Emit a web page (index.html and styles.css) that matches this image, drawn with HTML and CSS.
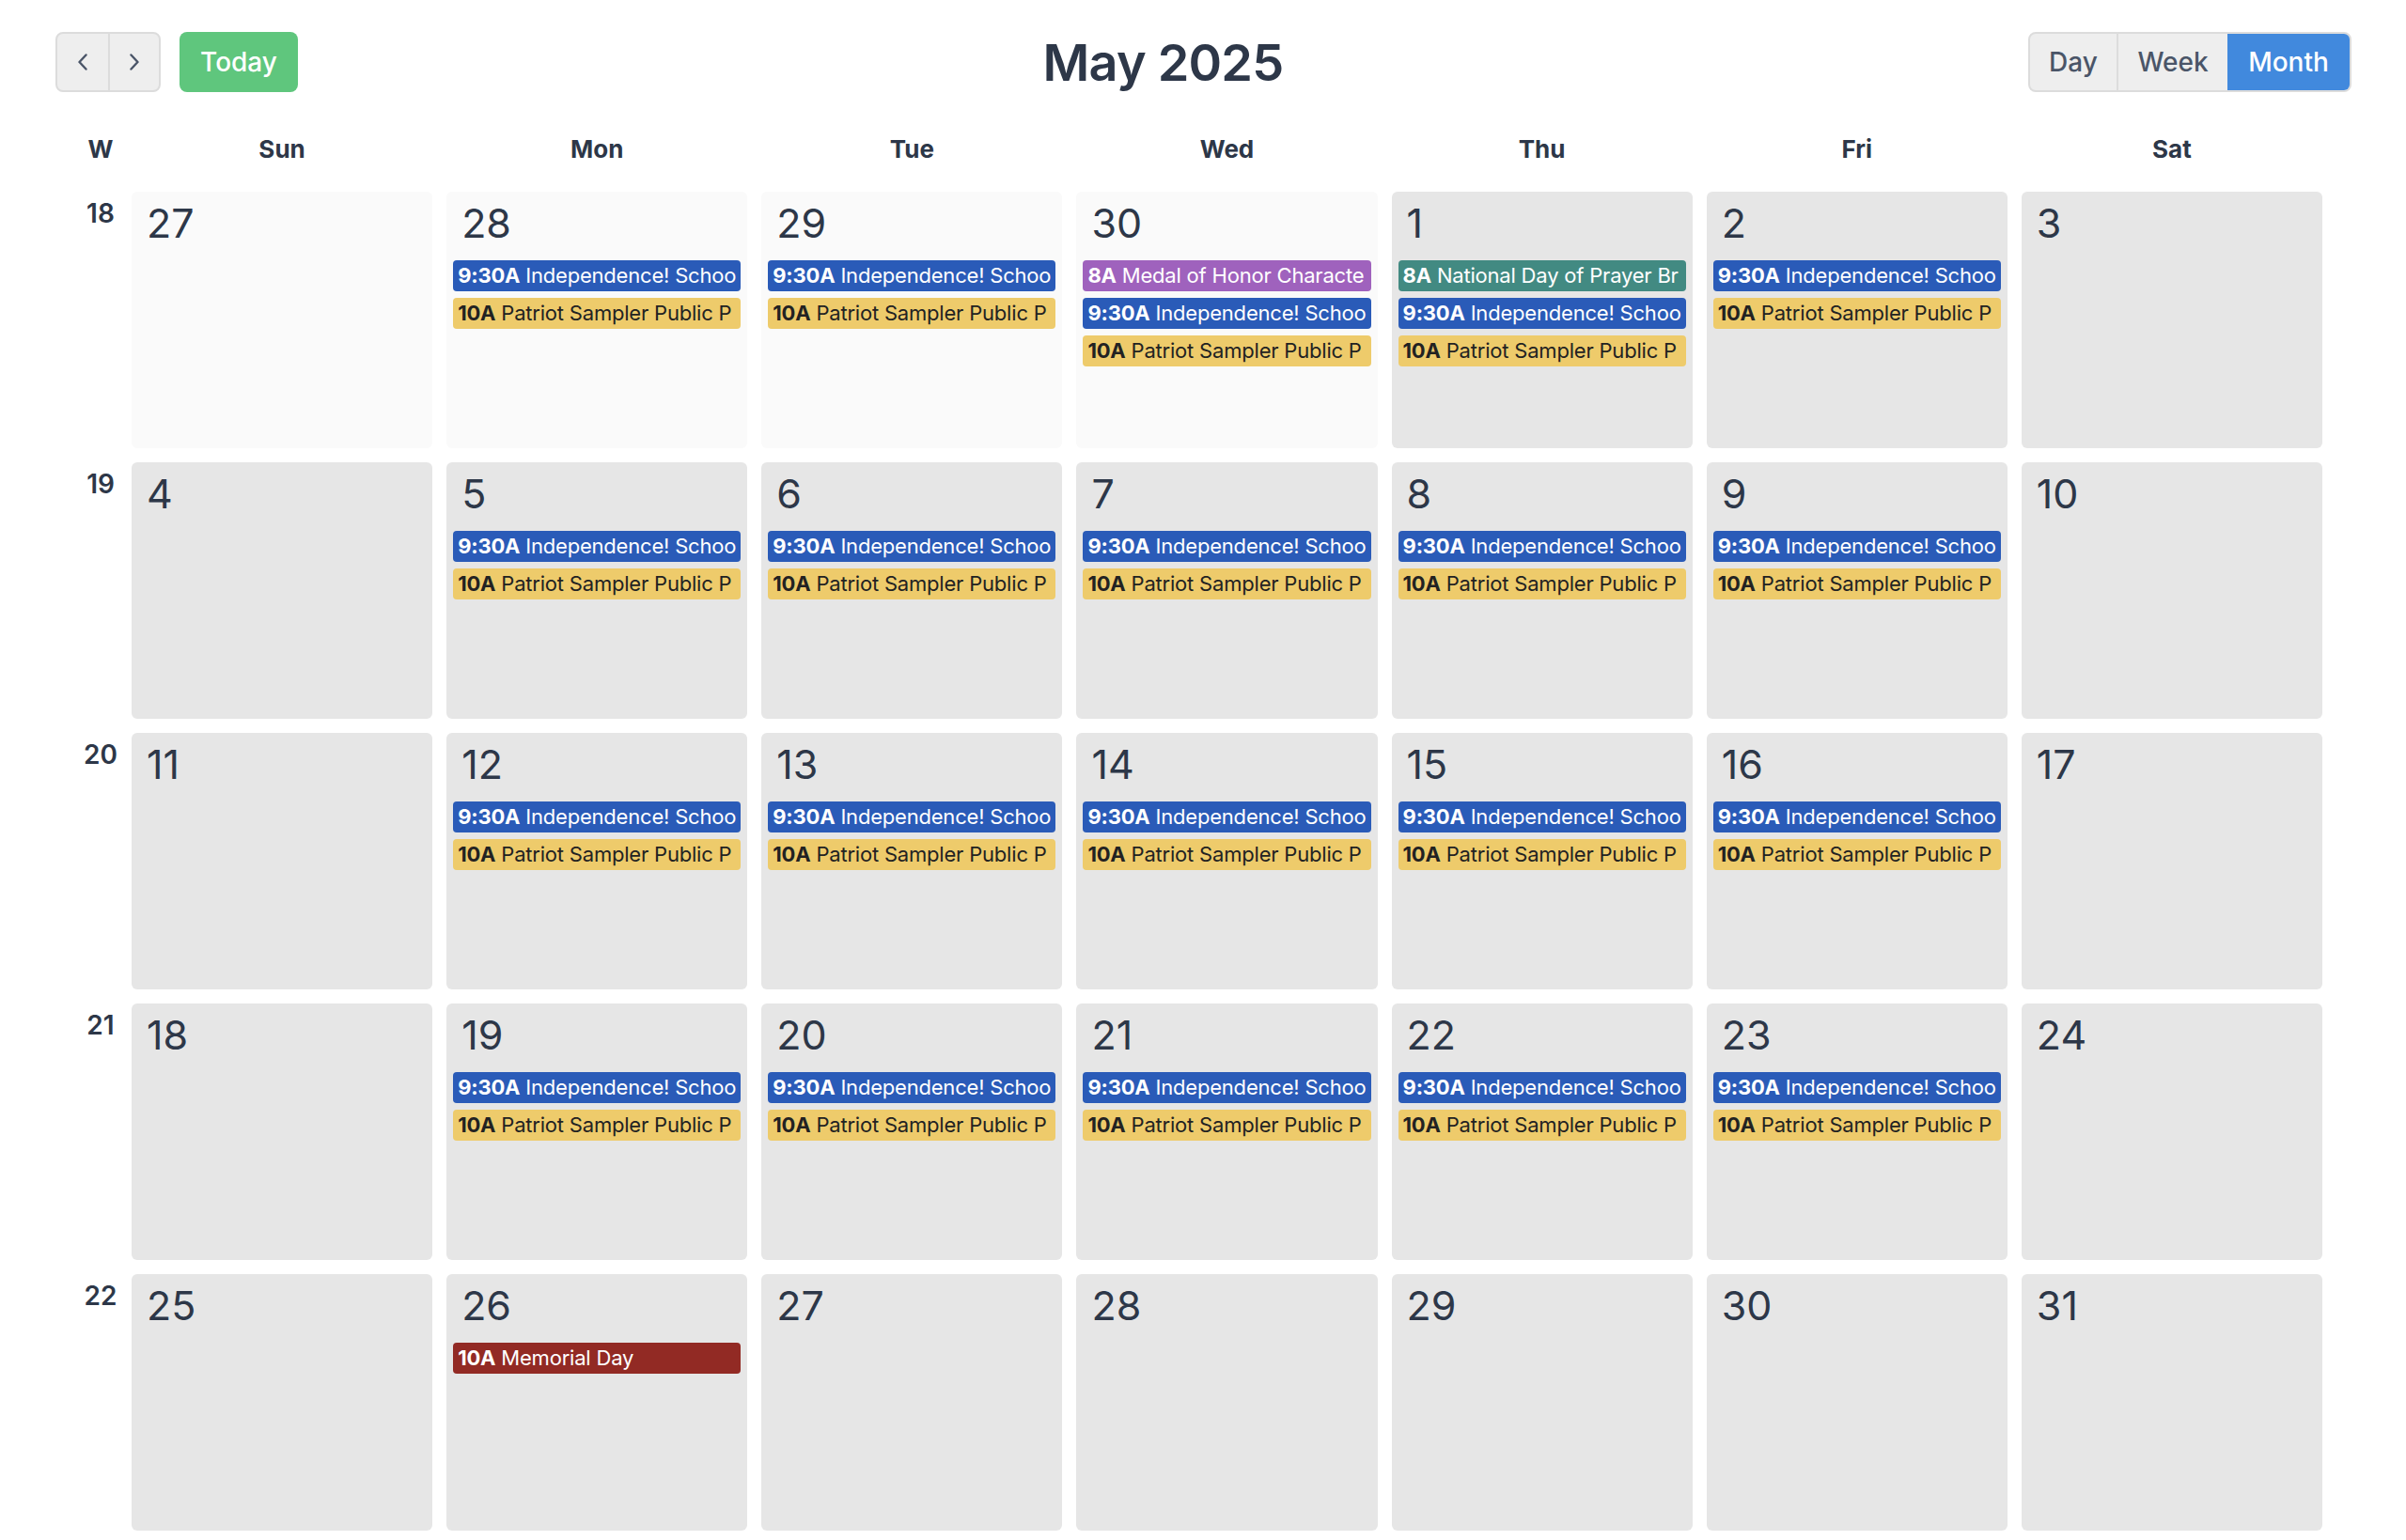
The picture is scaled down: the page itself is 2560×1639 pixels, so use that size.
FILE: index.html
```html
<!DOCTYPE html>
<html lang="en">
<head>
<meta charset="utf-8">
<title>May 2025</title>
<link rel="stylesheet" href="styles.css">
</head>
<body>
<div class="toolbar">
  <div class="left-tools">
    <div class="btn-group nav-group">
      <button class="btn nav-btn" aria-label="Previous"><svg width="12" height="18" viewBox="0 0 12 18"><polyline points="9.5,1.5 2.5,9 9.5,16.5" fill="none" stroke="#4a5568" stroke-width="2.4" stroke-linecap="round" stroke-linejoin="round"/></svg></button>
      <button class="btn nav-btn" aria-label="Next"><svg width="12" height="18" viewBox="0 0 12 18"><polyline points="2.5,1.5 9.5,9 2.5,16.5" fill="none" stroke="#4a5568" stroke-width="2.4" stroke-linecap="round" stroke-linejoin="round"/></svg></button>
    </div>
    <button class="btn today-btn">Today</button>
  </div>
  <h1 class="title">May 2025</h1>
  <div class="btn-group view-group">
    <button class="btn view-btn day-btn">Day</button>
    <button class="btn view-btn week-btn">Week</button>
    <button class="btn view-btn month-btn active">Month</button>
  </div>
</div>

<div class="month">
  <div class="head wk">W</div>
  <div class="head">Sun</div>
  <div class="head">Mon</div>
  <div class="head">Tue</div>
  <div class="head">Wed</div>
  <div class="head">Thu</div>
  <div class="head">Fri</div>
  <div class="head">Sat</div>

  <!-- week 18 -->
  <div class="wknum">18</div>
  <div class="cell out"><div class="num">27</div></div>
  <div class="cell out"><div class="num">28</div>
    <div class="ev blue"><b>9:30A</b> Independence! Schoo</div>
    <div class="ev yellow"><b>10A</b> Patriot Sampler Public P</div></div>
  <div class="cell out"><div class="num">29</div>
    <div class="ev blue"><b>9:30A</b> Independence! Schoo</div>
    <div class="ev yellow"><b>10A</b> Patriot Sampler Public P</div></div>
  <div class="cell out"><div class="num">30</div>
    <div class="ev purple"><b>8A</b> Medal of Honor Characte</div>
    <div class="ev blue"><b>9:30A</b> Independence! Schoo</div>
    <div class="ev yellow"><b>10A</b> Patriot Sampler Public P</div></div>
  <div class="cell"><div class="num">1</div>
    <div class="ev teal"><b>8A</b> National Day of Prayer Br</div>
    <div class="ev blue"><b>9:30A</b> Independence! Schoo</div>
    <div class="ev yellow"><b>10A</b> Patriot Sampler Public P</div></div>
  <div class="cell"><div class="num">2</div>
    <div class="ev blue"><b>9:30A</b> Independence! Schoo</div>
    <div class="ev yellow"><b>10A</b> Patriot Sampler Public P</div></div>
  <div class="cell"><div class="num">3</div></div>

  <!-- week 19 -->
  <div class="wknum">19</div>
  <div class="cell"><div class="num">4</div></div>
  <div class="cell"><div class="num">5</div>
    <div class="ev blue"><b>9:30A</b> Independence! Schoo</div>
    <div class="ev yellow"><b>10A</b> Patriot Sampler Public P</div></div>
  <div class="cell"><div class="num">6</div>
    <div class="ev blue"><b>9:30A</b> Independence! Schoo</div>
    <div class="ev yellow"><b>10A</b> Patriot Sampler Public P</div></div>
  <div class="cell"><div class="num">7</div>
    <div class="ev blue"><b>9:30A</b> Independence! Schoo</div>
    <div class="ev yellow"><b>10A</b> Patriot Sampler Public P</div></div>
  <div class="cell"><div class="num">8</div>
    <div class="ev blue"><b>9:30A</b> Independence! Schoo</div>
    <div class="ev yellow"><b>10A</b> Patriot Sampler Public P</div></div>
  <div class="cell"><div class="num">9</div>
    <div class="ev blue"><b>9:30A</b> Independence! Schoo</div>
    <div class="ev yellow"><b>10A</b> Patriot Sampler Public P</div></div>
  <div class="cell"><div class="num">10</div></div>

  <!-- week 20 -->
  <div class="wknum">20</div>
  <div class="cell"><div class="num">11</div></div>
  <div class="cell"><div class="num">12</div>
    <div class="ev blue"><b>9:30A</b> Independence! Schoo</div>
    <div class="ev yellow"><b>10A</b> Patriot Sampler Public P</div></div>
  <div class="cell"><div class="num">13</div>
    <div class="ev blue"><b>9:30A</b> Independence! Schoo</div>
    <div class="ev yellow"><b>10A</b> Patriot Sampler Public P</div></div>
  <div class="cell"><div class="num">14</div>
    <div class="ev blue"><b>9:30A</b> Independence! Schoo</div>
    <div class="ev yellow"><b>10A</b> Patriot Sampler Public P</div></div>
  <div class="cell"><div class="num">15</div>
    <div class="ev blue"><b>9:30A</b> Independence! Schoo</div>
    <div class="ev yellow"><b>10A</b> Patriot Sampler Public P</div></div>
  <div class="cell"><div class="num">16</div>
    <div class="ev blue"><b>9:30A</b> Independence! Schoo</div>
    <div class="ev yellow"><b>10A</b> Patriot Sampler Public P</div></div>
  <div class="cell"><div class="num">17</div></div>

  <!-- week 21 -->
  <div class="wknum">21</div>
  <div class="cell"><div class="num">18</div></div>
  <div class="cell"><div class="num">19</div>
    <div class="ev blue"><b>9:30A</b> Independence! Schoo</div>
    <div class="ev yellow"><b>10A</b> Patriot Sampler Public P</div></div>
  <div class="cell"><div class="num">20</div>
    <div class="ev blue"><b>9:30A</b> Independence! Schoo</div>
    <div class="ev yellow"><b>10A</b> Patriot Sampler Public P</div></div>
  <div class="cell"><div class="num">21</div>
    <div class="ev blue"><b>9:30A</b> Independence! Schoo</div>
    <div class="ev yellow"><b>10A</b> Patriot Sampler Public P</div></div>
  <div class="cell"><div class="num">22</div>
    <div class="ev blue"><b>9:30A</b> Independence! Schoo</div>
    <div class="ev yellow"><b>10A</b> Patriot Sampler Public P</div></div>
  <div class="cell"><div class="num">23</div>
    <div class="ev blue"><b>9:30A</b> Independence! Schoo</div>
    <div class="ev yellow"><b>10A</b> Patriot Sampler Public P</div></div>
  <div class="cell"><div class="num">24</div></div>

  <!-- week 22 -->
  <div class="wknum">22</div>
  <div class="cell"><div class="num">25</div></div>
  <div class="cell"><div class="num">26</div>
    <div class="ev red"><b>10A</b> Memorial Day</div></div>
  <div class="cell"><div class="num">27</div></div>
  <div class="cell"><div class="num">28</div></div>
  <div class="cell"><div class="num">29</div></div>
  <div class="cell"><div class="num">30</div></div>
  <div class="cell"><div class="num">31</div></div>
</div>
</body>
</html>
```

FILE: styles.css
```css
* { box-sizing: border-box; }

html, body {
  margin: 0;
  padding: 0;
  background: #ffffff;
}

body {
  font-family: Inter, "Noto Sans", "Liberation Sans", sans-serif;
  color: #2d3748;
  width: 2560px;
  height: 1639px;
  overflow: hidden;
}

/* ---------- toolbar ---------- */
.toolbar {
  display: flex;
  align-items: center;
  justify-content: space-between;
  padding: 34px 58px 0 59px;
  height: 98px;
}

.left-tools {
  display: flex;
  align-items: center;
  gap: 20px;
}

.btn {
  font-family: inherit;
  border: 0;
  margin: 0;
  padding: 0;
  background: transparent;
  cursor: pointer;
}

.btn-group {
  display: flex;
  height: 64px;
  border: 2px solid #dcdcdc;
  border-radius: 8px;
  background: #eeeeee;
  overflow: hidden;
}

.nav-btn {
  width: 54px;
  height: 100%;
  display: flex;
  align-items: center;
  justify-content: center;
}

.nav-btn + .nav-btn {
  border-left: 2px solid #dcdcdc;
}

.today-btn {
  width: 126px;
  height: 64px;
  border-radius: 8px;
  background: #5fc67d;
  color: #ffffff;
  font-size: 28px;
  font-weight: 500;
}

.title {
  margin: 0;
  font-size: 54px;
  font-weight: 600;
  color: #2d3748;
  letter-spacing: -0.8px;
}

.view-btn {
  height: 100%;
  font-size: 28px;
  font-weight: 500;
  color: #4a5568;
}

.day-btn { width: 94px; border-right: 2px solid #dcdcdc; }
.week-btn { width: 116px; }
.month-btn { width: 130px; }

.view-btn.active {
  background: #4189dd;
  color: #ffffff;
}

/* ---------- month grid ---------- */
.month {
  display: grid;
  grid-template-columns: 36px repeat(7, 1fr);
  grid-template-rows: 50px repeat(5, 273px);
  column-gap: 15px;
  row-gap: 15px;
  width: 2382px;
  margin: 41px 0 0 89px;
}

.head {
  font-size: 26px;
  font-weight: 700;
  line-height: 40px;
  height: 40px;
  text-align: center;
  color: #2d3748;
}

.wknum {
  font-size: 28px;
  font-weight: 600;
  line-height: 28px;
  padding-top: 9px;
  text-align: center;
  color: #2d3748;
  white-space: nowrap;
  display: flex;
  justify-content: center;
}

.cell {
  background: #e6e6e6;
  border-radius: 6px;
  padding: 12px 7px 0 7px;
  overflow: hidden;
}

.cell.out {
  background: #fafafa;
}

.num {
  font-size: 43px;
  font-weight: 400;
  line-height: 43px;
  padding-left: 9px;
  margin-bottom: 18px;
  color: #2d3748;
}

.ev {
  height: 33px;
  line-height: 33px;
  margin-bottom: 7px;
  padding: 0 5px;
  border-radius: 4px;
  font-size: 22px;
  letter-spacing: -0.2px;
  white-space: nowrap;
  overflow: hidden;
  color: #ffffff;
}

.ev b { font-weight: 700; }

.ev.blue { background: #2a5bb8; }
.ev.yellow { background: #eecb6b; color: #222222; }
.ev.purple { background: #9f62bd; }
.ev.teal { background: #428a82; }
.ev.red { background: #922a24; }
```
